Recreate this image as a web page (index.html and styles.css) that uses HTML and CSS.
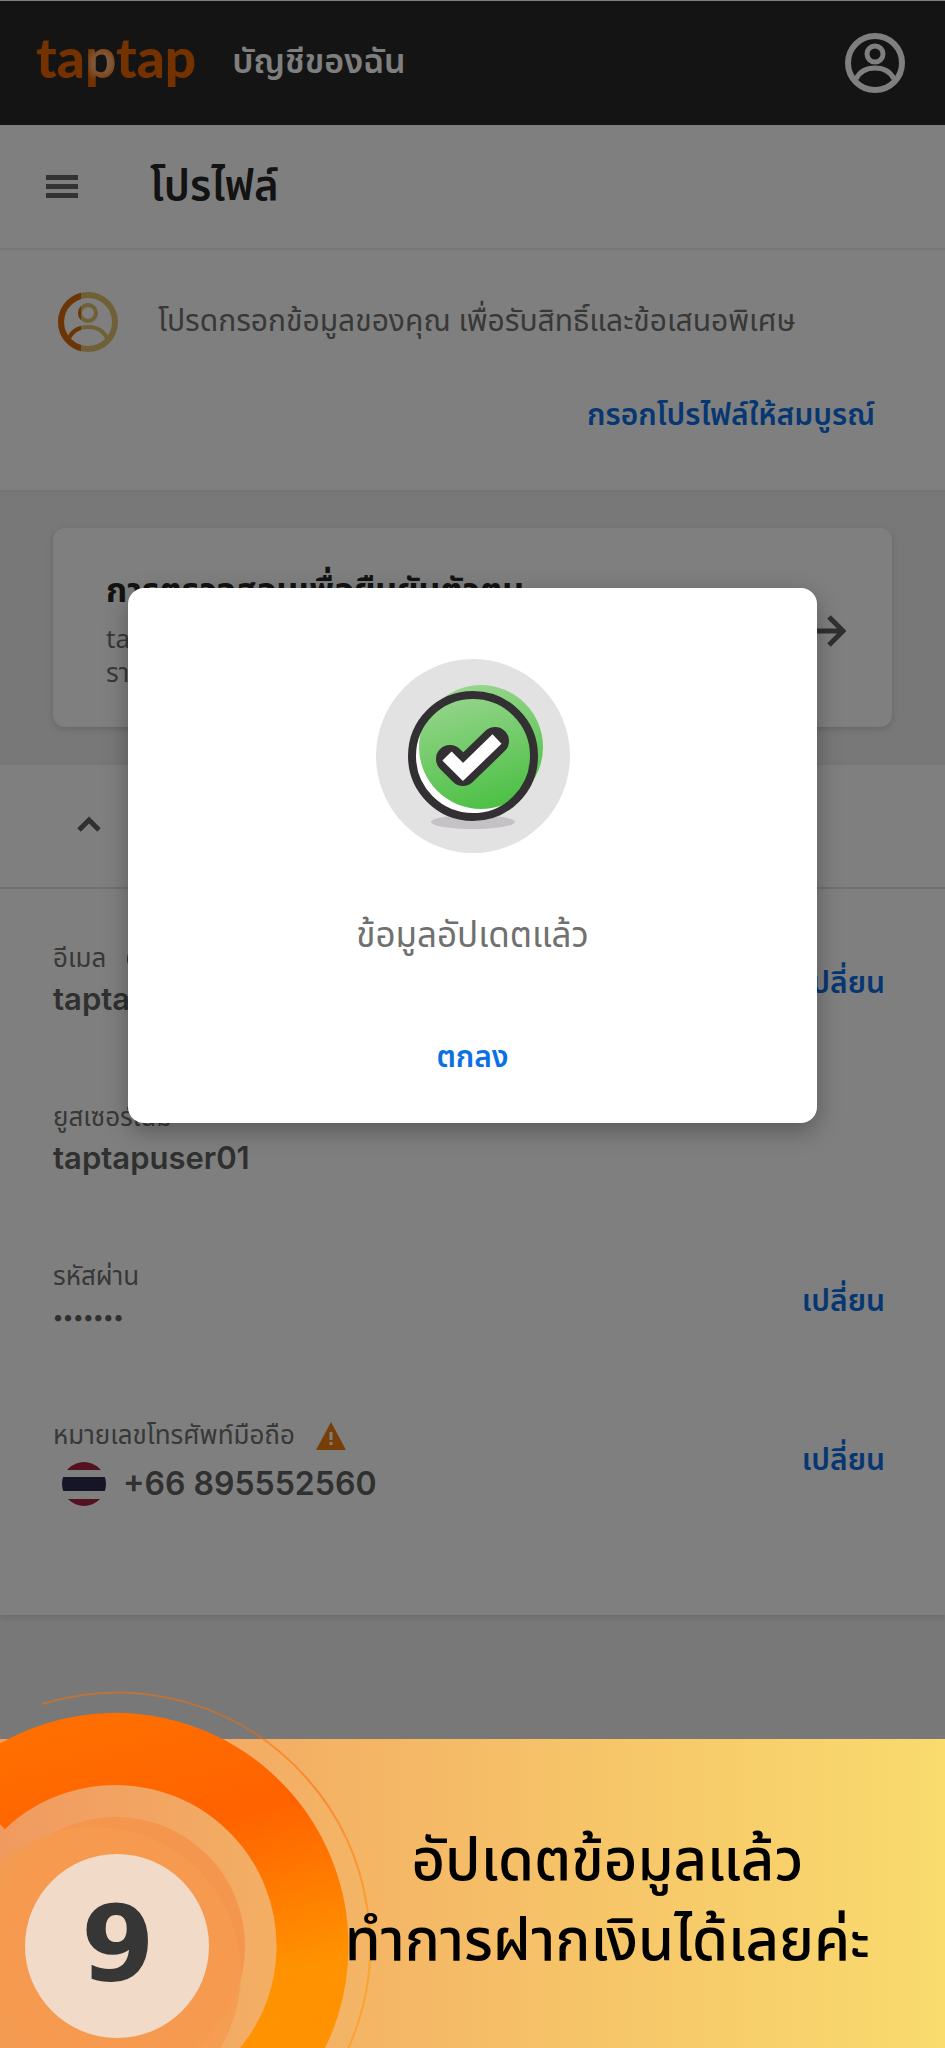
FILE: index.html
```html
<!DOCTYPE html>
<html lang="th">
<head>
<meta charset="utf-8">
<meta name="viewport" content="width=device-width, initial-scale=1">
<title>โปรไฟล์</title>
<link rel="stylesheet" href="styles.css">
</head>
<body>
<div class="app">
  <header class="topbar">
    <span class="logo">taptap</span>
    <span class="topbar-title">บัญชีของฉัน</span>
    <button class="icon-button" type="button" aria-label="บัญชี">
      <svg width="60" height="60" viewBox="0 0 60 60" fill="none" stroke="#ffffff" stroke-width="6">
        <circle cx="30" cy="30" r="27"/>
        <circle cx="30" cy="21" r="8" stroke-width="5"/>
        <path d="M11 46C15 38 22 35 30 35s15 3 19 11" stroke-width="5"/>
      </svg>
    </button>
  </header>

  <div class="page-head">
    <button class="icon-button" type="button" aria-label="เมนู">
      <svg width="32" height="24" viewBox="0 0 32 24" fill="#666666">
        <rect width="32" height="5"/><rect y="9" width="32" height="5"/><rect y="18" width="32" height="5"/>
      </svg>
    </button>
    <h1>โปรไฟล์</h1>
  </div>

  <section class="notice">
    <div class="notice-row">
      <svg width="60" height="60" viewBox="0 0 60 60" fill="none" stroke-width="6">
        <defs>
          <clipPath id="done"><rect width="23" height="60"/></clipPath>
          <g id="person">
            <circle cx="30" cy="30" r="27"/>
            <circle cx="30" cy="21" r="8" stroke-width="4"/>
            <path d="M11 46C15 38 22 35 30 35s15 3 19 11" stroke-width="4"/>
          </g>
        </defs>
        <use href="#person" stroke="#e0c070"/>
        <use href="#person" stroke="#d96a10" clip-path="url(#done)"/>
      </svg>
      <p>โปรดกรอกข้อมูลของคุณ เพื่อรับสิทธิ์และข้อเสนอพิเศษ</p>
    </div>
    <a class="link" href="#profile">กรอกโปรไฟล์ให้สมบูรณ์</a>
  </section>

  <div class="card-area">
    <section class="card">
      <div>
        <h2>การตรวจสอบเพื่อยืนยันตัวตน</h2>
        <p>taptap<br>รายละเอียด</p>
      </div>
      <svg width="32" height="32" viewBox="0 0 32 32" fill="none" stroke="#606060" stroke-width="5">
        <path d="M0 16h28M15 2l14 14-14 14"/>
      </svg>
    </section>
  </div>

  <section class="panel" id="profile">
    <div class="panel-head">
      <svg width="24" height="16" viewBox="0 0 24 16" fill="none" stroke="#606060" stroke-width="5">
        <path d="M2 14L12 4l10 10"/>
      </svg>
    </div>
    <div class="row">
      <div class="info">
        <div class="label">อีเมล
          <svg width="32" height="28" viewBox="0 0 32 28">
            <circle cx="14" cy="14" r="13" fill="#606060"/>
          </svg>
        </div>
        <div class="value">taptapuser01</div>
      </div>
      <button class="link" type="button">เปลี่ยน</button>
    </div>
    <div class="row">
      <div class="info">
        <div class="label">ยูสเซอร์เนม</div>
        <div class="value">taptapuser01</div>
      </div>
    </div>
    <div class="row">
      <div class="info">
        <div class="label">รหัสผ่าน</div>
        <div class="value dots">•••••••</div>
      </div>
      <button class="link" type="button">เปลี่ยน</button>
    </div>
    <div class="row">
      <div class="info">
        <div class="label">หมายเลขโทรศัพท์มือถือ
          <svg width="32" height="28" viewBox="0 0 32 28">
            <path d="M16 0L31 28H1z" fill="#f07c10"/>
            <path d="M16 10v8M16 20v3" stroke="#ffffff" stroke-width="3"/>
          </svg>
        </div>
        <div class="value phone">
          <svg width="46" height="46" viewBox="0 0 46 46">
            <clipPath id="flag"><circle cx="23" cy="23" r="22"/></clipPath>
            <g clip-path="url(#flag)">
              <rect width="46" height="46" fill="#ffffff"/>
              <rect width="46" height="9" fill="#a82440"/>
              <rect y="16" width="46" height="14" fill="#2c2a4c"/>
              <rect y="38" width="46" height="8" fill="#a82440"/>
            </g>
          </svg>
          +66 895552560
        </div>
      </div>
      <button class="link" type="button">เปลี่ยน</button>
    </div>
  </section>

  <div class="backdrop">
    <div class="dialog" role="dialog" aria-modal="true" aria-labelledby="message">
      <svg width="196" height="196" viewBox="0 0 196 196">
        <defs>
          <linearGradient id="green" x1="0.3" y1="0" x2="0.6" y2="1">
            <stop offset="0" stop-color="#9ad690"/>
            <stop offset="1" stop-color="#4cc044"/>
          </linearGradient>
        </defs>
        <circle cx="98" cy="98" r="97" fill="#e3e2e3"/>
        <ellipse cx="98" cy="164" rx="42" ry="7" fill="#c4c2c4"/>
        <circle cx="98" cy="98" r="61" fill="#ffffff"/>
        <circle cx="106" cy="89" r="62" fill="url(#green)"/>
        <circle cx="98" cy="98" r="61" fill="none" stroke="#333033" stroke-width="8"/>
        <path d="M75 101l13 13 32-31" fill="none" stroke="#333033" stroke-width="28" stroke-linejoin="round" stroke-linecap="round"/>
        <path d="M72 98l16 16 34-33" fill="none" stroke="#ffffff" stroke-width="13"/>
      </svg>
      <p id="message">ข้อมูลอัปเดตแล้ว</p>
      <button class="link" type="button">ตกลง</button>
    </div>
  </div>
</div>

<footer class="banner">
  <svg class="rings" width="372" height="360" viewBox="0 1688 372 360">
    <defs>
      <linearGradient id="ring" gradientUnits="userSpaceOnUse" x1="140" y1="1711" x2="220" y2="2020">
        <stop offset="0" stop-color="#ff6e00"/>
        <stop offset="0.38" stop-color="#ff6200"/>
        <stop offset="0.9" stop-color="#ff9200"/>
      </linearGradient>
    </defs>
    <path d="M42 1703A253 253 0 0 1 348 2048" fill="none" stroke="url(#ring)" stroke-width="2" opacity="0.5"/>
    <path d="M-20 1802A197 197 0 1 1 116 2142" fill="none" stroke="url(#ring)" stroke-width="72"/>
    <circle cx="116" cy="1945" r="129" fill="#f5964e"/>
    <circle cx="95" cy="1972" r="146" fill="#f59b50" opacity="0.85"/>
    <circle cx="117" cy="1945" r="92" fill="#f1dbc8"/>
    <text class="step" x="118" y="1980" text-anchor="middle">9</text>
  </svg>
  <p class="caption">อัปเดตข้อมูลแล้ว<br>ทำการฝากเงินได้เลยค่ะ</p>
</footer>
</body>
</html>
```
FILE: styles.css
```css
* { box-sizing: border-box; }

body {
  margin: 0;
  font-family: "Noto Sans Thai", "Noto Sans", sans-serif;
  font-size: 30px;
  line-height: 40px;
  color: #707070;
  background: #f0f0f0;
}

h1, h2, p { margin: 0; }

button {
  padding: 0;
  border: 0;
  background: none;
  font: inherit;
}

svg { display: block; flex: none; }

.icon-button { line-height: 0; }

.link {
  color: #0c6fe4;
  font-weight: 600;
  text-decoration: none;
}

.app {
  position: relative;
  padding-bottom: 124px;
}

.topbar {
  display: flex;
  align-items: center;
  height: 125px;
  padding: 0 40px 0 36px;
  border-top: 1px solid #ffffff;
  background: #282828;
}

.logo {
  padding-bottom: 12px;
  font-family: Lato, sans-serif;
  font-size: 55px;
  font-weight: 900;
  line-height: 64px;
  color: transparent;
  background: radial-gradient(circle at 66px 38px, #ffe0c8 0, #ffa860 10px, #e86400 20px);
  background-clip: text;
}

.topbar-title {
  flex: 1;
  margin-left: 36px;
  color: #ffffff;
  font-size: 34px;
  font-weight: 600;
}

.page-head {
  display: flex;
  align-items: center;
  gap: 72px;
  height: 125px;
  padding: 0 46px;
  border-bottom: 2px solid #ececec;
  background: #ffffff;
}

h1 {
  font-size: 42px;
  font-weight: 600;
  line-height: 56px;
  color: #262626;
}

.notice {
  padding: 42px 70px 54px 58px;
  background: #ffffff;
  text-align: right;
}

.notice-row {
  display: flex;
  align-items: center;
  gap: 40px;
  margin-bottom: 44px;
  text-align: left;
}

.card-area {
  padding: 36px 53px 38px;
  border-top: 2px solid #e6e6e6;
}

.card {
  display: flex;
  align-items: center;
  justify-content: space-between;
  height: 199px;
  padding: 6px 46px 0 53px;
  border-radius: 12px;
  background: #ffffff;
  box-shadow: 0 2px 6px #cccccc;
}

.card p {
  font-size: 26px;
  line-height: 34px;
}

h2 {
  margin-bottom: 10px;
  font-size: 34px;
  font-weight: 700;
  line-height: 42px;
  color: #262626;
}

.panel {
  padding-bottom: 90px;
  background: #ffffff;
  box-shadow: 0 2px 6px #d8d8d8;
}

.panel-head {
  display: flex;
  align-items: center;
  height: 124px;
  padding-bottom: 4px;
  padding-left: 77px;
  border-bottom: 2px solid #e2e2e2;
}

.row {
  display: flex;
  align-items: center;
  justify-content: space-between;
  height: 159px;
  padding: 30px 60px 0 53px;
}

.info {
  align-self: flex-start;
  padding-top: 20px;
}

.label {
  display: flex;
  align-items: center;
  gap: 20px;
  height: 40px;
  font-size: 26px;
}

.value {
  font-family: Inter, sans-serif;
  font-size: 31px;
  font-weight: 600;
  color: #606060;
}

.dots { font-size: 20px; }

.phone {
  display: flex;
  align-items: center;
  gap: 16px;
  height: 56px;
  padding-left: 8px;
  font-size: 32px;
}

.backdrop {
  position: absolute;
  inset: 0;
  display: flex;
  align-items: center;
  justify-content: center;
  padding-bottom: 28px;
  background: rgba(0, 0, 0, 0.5);
}

.dialog {
  display: flex;
  flex-direction: column;
  align-items: center;
  width: 73%;
  padding: 70px 32px 45px;
  border-radius: 16px;
  background: #ffffff;
  box-shadow: 0 8px 24px rgba(0, 0, 0, 0.3);
}

.dialog p {
  margin: 61px 0 79px;
  font-size: 35px;
  line-height: 44px;
}

.banner {
  position: relative;
  display: flex;
  align-items: center;
  justify-content: flex-end;
  min-height: 310px;
  padding-top: 16px;
  padding-right: 75px;
  background: linear-gradient(90deg, #f19a60, #f3ae64 28%, #f6c368 60%, #f9db6e);
}

.rings {
  position: absolute;
  left: 0;
  bottom: 0;
}

.step {
  font-family: "DejaVu Sans", sans-serif;
  font-size: 106px;
  font-weight: 700;
  fill: #363636;
}

.caption {
  position: relative;
  font-size: 58px;
  font-weight: 500;
  line-height: 80px;
  color: #000000;
  text-align: center;
}
```
